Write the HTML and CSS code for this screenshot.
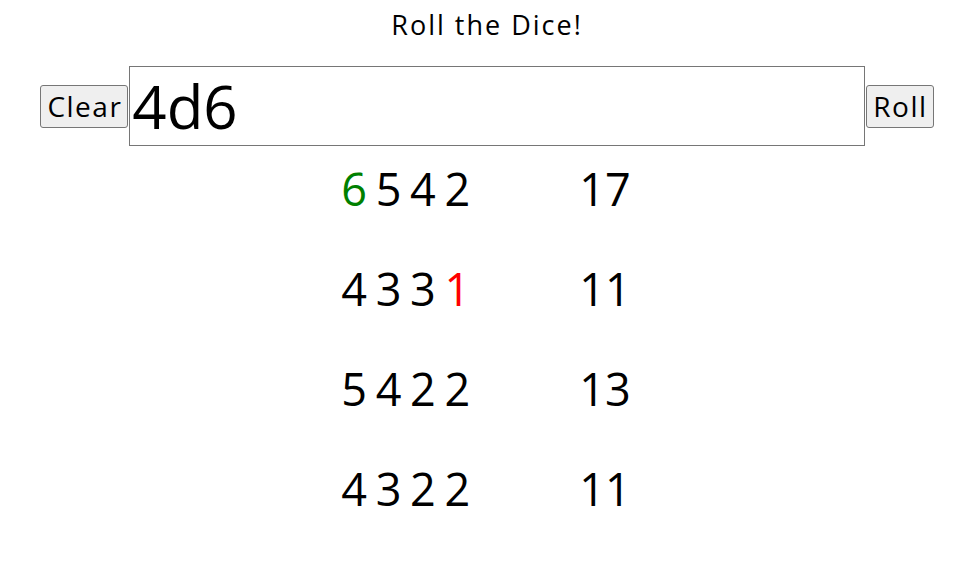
FILE: index.html
```html
<!DOCTYPE html>
<html>
<head>
<meta charset="utf-8">
<link rel="stylesheet" href="styles.css">
</head>
<body>
<div class="title">Roll the Dice!</div>
<div class="controls">
  <button class="btn">Clear</button>
  <input class="expr" type="text" value="4d6">
  <button class="btn">Roll</button>
</div>
<div class="results">
  <div class="dice"><span class="max">6</span> 5 4 2</div><div class="total">17</div>
  <div class="dice">4 3 3 <span class="min">1</span></div><div class="total">11</div>
  <div class="dice">5 4 2 2</div><div class="total">13</div>
  <div class="dice">4 3 2 2</div><div class="total">11</div>
</div>
</body>
</html>
```
FILE: styles.css
```css
body {
  margin: 0;
  font-family: "Open Sans", "DejaVu Sans", sans-serif;
  color: #000;
  background: #fff;
}
.title {
  text-align: center;
  font-size: 27px;
  letter-spacing: 2px;
  line-height: 34px;
  padding-top: 8px;
}
.controls {
  display: flex;
  justify-content: center;
  align-items: center;
  margin-top: 24px;
}
.btn {
  font-family: inherit;
  font-size: 28px;
  letter-spacing: 1.5px;
  height: 43px;
  width: auto;
  padding: 0 5px 0 6px;
  background: #efefef;
  border: 1px solid #767676;
  border-radius: 3px;
  color: #000;
}
.expr {
  font-family: inherit;
  font-size: 60px;
  width: 736px;
  height: 80px;
  box-sizing: border-box;
  border: 1px solid #767676;
  padding: 0 2px;
  margin: 0 1px;
  color: #000;
}
.results {
  display: grid;
  grid-template-columns: 238px auto;
  justify-content: center;
  font-size: 45px;
  line-height: 100px;
  word-spacing: -3px;
  margin-top: -7px;
  margin-left: -2px;
}
.max { color: #008000; }
.min { color: #ff0000; }
```
